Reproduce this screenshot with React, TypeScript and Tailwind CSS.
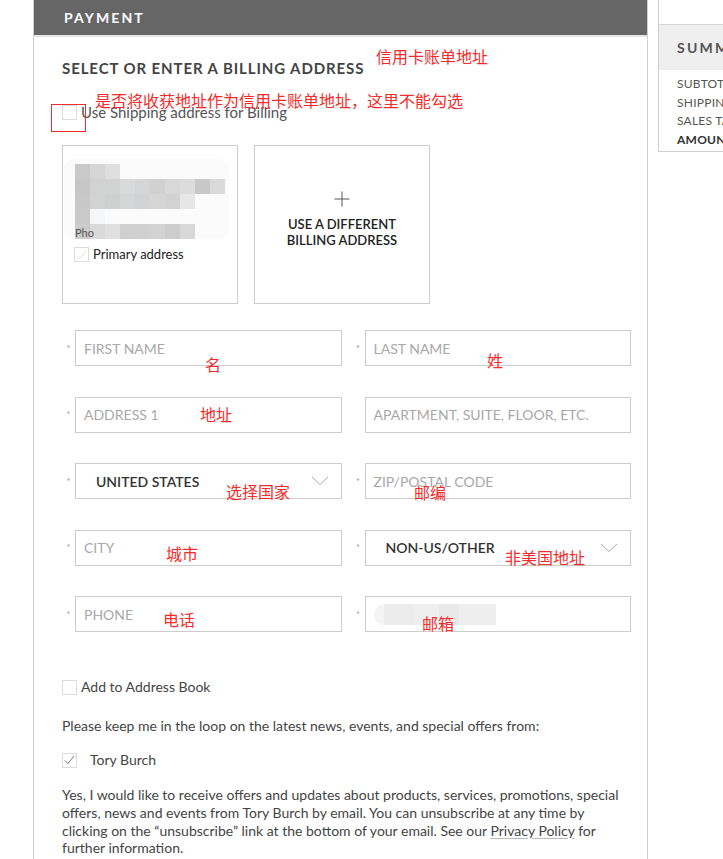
import type { ReactNode } from "react";

const font = { fontFamily: "Lato, 'Open Sans', Arial, sans-serif" };
const cjk = { fontFamily: "'Noto Sans CJK SC', sans-serif" };

// pixelated blur over the saved address
const blur: [number, number, string][] = [
    [0, 0, "#c9c9c9"], [1, 0, "#d6d6d6"], [2, 0, "#dedede"],
    [0, 1, "#c7c7c7"], [1, 1, "#d2d2d2"], [2, 1, "#d1d3d3"], [3, 1, "#dadada"], [4, 1, "#d4d5d7"], [5, 1, "#d1d1d1"], [6, 1, "#d8d8d8"], [7, 1, "#dcdcdc"], [8, 1, "#c8c8c8"], [9, 1, "#dadada"],
    [0, 2, "#c8c8c8"], [1, 2, "#d3d3d3"], [2, 2, "#cfd1d1"], [3, 2, "#d6d6d6"], [4, 2, "#d2d3d5"], [5, 2, "#d6d6d6"], [6, 2, "#d2d2d2"], [7, 2, "#e6e6e6"],
    [0, 3, "#c9c9c9"], [1, 3, "#f5f6f8"],
    [0, 4, "#cbcbcb"], [1, 4, "#dadada"], [2, 4, "#e0e0e0"], [3, 4, "#cfcfcf"], [4, 4, "#d0d0d0"], [5, 4, "#d3d3d3"], [6, 4, "#cdcdcd"], [7, 4, "#d8d8d8"],
];

function Note({ x, y, children }: { x: number; y: number; children: ReactNode }) {
    return (
        <span
            className="absolute text-[16px] leading-none text-[#f52b2b] whitespace-nowrap"
            style={{ ...cjk, left: x, top: y }}
        >
            {children}
        </span>
    );
}

function Box({ checked, faint }: { checked?: boolean; faint?: boolean }) {
    return (
        <span className="w-[15px] h-[15px] border border-[#dcdcdc] bg-white flex items-center justify-center shrink-0">
            {checked && (
                <svg width="11" height="10" viewBox="0 0 11 10">
                    <path d="M1 5.5 L4 8.5 L10 1" fill="none" stroke={faint ? "#e2e2e2" : "#777"} strokeWidth="1" />
                </svg>
            )}
        </span>
    );
}

function Field({ label, req = true, select, children }: { label?: string; req?: boolean; select?: boolean; children?: ReactNode }) {
    return (
        <div className="flex items-center">
            <span className="w-[13px] text-[9px] text-[#999] text-center leading-none">{req ? "*" : ""}</span>
            <div className="flex-1 h-[36px] border border-[#cccccc] bg-white flex items-center relative">
                {select ? (
                    <>
                        <span className="pl-[20px] text-[14px] font-semibold text-[#333]">{label}</span>
                        <svg className="absolute right-[12px] top-[12px]" width="18" height="10" viewBox="0 0 18 10">
                            <path d="M1 1 L9 8.5 L17 1" fill="none" stroke="#aaa" strokeWidth="1" />
                        </svg>
                    </>
                ) : (
                    <span className="pl-[8px] text-[14px] text-[#a8a8a8]">{label}</span>
                )}
                {children}
            </div>
        </div>
    );
}

export default function App() {
    return (
        <div className="relative w-[723px] h-[859px] overflow-hidden bg-white flex" style={font}>
            <div className="w-[33px] shrink-0" />

            {/* Payment panel */}
            <div className="w-[615px] shrink-0 border-x border-[#cfcfcf] flex flex-col">
                <div className="h-[37px] bg-[#666666] border-b-[2px] border-[#e4e4e4] flex items-center pl-[30px]">
                    <span className="text-white text-[14px] font-bold tracking-[0.15em]">PAYMENT</span>
                </div>

                <div className="pl-[28px] pr-[16px]">
                    <h2 className="mt-[22px] text-[15px] font-bold text-[#444] tracking-[0.06em] leading-[18px]">
                        SELECT OR ENTER A BILLING ADDRESS
                    </h2>

                    <label className="mt-[27px] flex items-center gap-[4px] text-[15px] text-[#555] leading-[16px]">
                        <Box />
                        <span>Use Shipping address for Billing</span>
                    </label>

                    {/* Address cards */}
                    <div className="mt-[25px] flex gap-[16px]">
                        <div className="w-[176px] h-[159px] border border-[#cccccc] relative">
                            <div className="absolute left-[1px] top-[13px] w-[165px] h-[80px] bg-[#fafafa] rounded-[10px] opacity-70" />
                            {blur.map(([cx, cy, c], i) => (
                                <div
                                    key={i}
                                    className="absolute w-[15px] h-[15px]"
                                    style={{ left: 12 + cx * 15, top: 18 + cy * 15, background: c }}
                                />
                            ))}
                            <span className="absolute left-[12px] top-[81px] text-[11px] text-[#555] leading-none">Pho</span>
                            <div className="absolute left-[11px] top-[99px] flex items-center gap-[4px] text-[13px] text-[#222]">
                                <Box checked faint />
                                <span>Primary address</span>
                            </div>
                        </div>
                        <div className="w-[176px] h-[159px] border border-[#cccccc] flex flex-col items-center pt-[45px]">
                            <svg width="16" height="16" viewBox="0 0 16 16">
                                <path d="M8 0.5 V15.5 M0.5 8 H15.5" stroke="#555" strokeWidth="1" />
                            </svg>
                            <span className="mt-[9px] text-[13px] font-semibold text-[#222] text-center leading-[16px]">
                                USE A DIFFERENT
                                <br />
                                BILLING ADDRESS
                            </span>
                        </div>
                    </div>

                    {/* Address form */}
                    <div className="mt-[26px] grid grid-cols-2 gap-x-[10px] gap-y-[30.5px]">
                        <Field label="FIRST NAME" />
                        <Field label="LAST NAME" />
                        <Field label="ADDRESS 1" />
                        <Field label="APARTMENT, SUITE, FLOOR, ETC." req={false} />
                        <Field label="UNITED STATES" select />
                        <Field label="ZIP/POSTAL CODE" />
                        <Field label="CITY" />
                        <Field label="NON-US/OTHER" select />
                        <Field label="PHONE" />
                        <Field>
                            <div className="absolute left-[8px] top-[7px] w-[122px] h-[21px] flex">
                                <div className="w-[10px] bg-[#f4f4f4] rounded-l-full" />
                                <div className="w-[30px] bg-[#ececec]" />
                                <div className="w-[25px] bg-[#efefef]" />
                                <div className="w-[20px] bg-[#e9e9e9]" />
                                <div className="w-[37px] bg-[#eeeeee]" />
                            </div>
                        </Field>
                    </div>

                    <label className="mt-[47px] flex items-center gap-[4px] text-[14px] text-[#444] leading-[16px]">
                        <Box />
                        <span>Add to Address Book</span>
                    </label>

                    <p className="mt-[22px] text-[14px] text-[#444] leading-[18px]">
                        Please keep me in the loop on the latest news, events, and special offers from:
                    </p>

                    <label className="mt-[17px] flex items-center gap-[13px] text-[14px] text-[#444] leading-[16px]">
                        <Box checked />
                        <span>Tory Burch</span>
                    </label>

                    <p className="mt-[18px] text-[14px] text-[#444] leading-[17.8px] pr-[10px]">
                        Yes, I would like to receive offers and updates about products, services, promotions, special
                        offers, news and events from Tory Burch by email. You can unsubscribe at any time by clicking on
                        the “unsubscribe” link at the bottom of your email. See our{" "}
                        <span className="underline decoration-[#bbb] underline-offset-2">Privacy Policy</span> for further
                        information.
                    </p>
                </div>
            </div>

            {/* Summary sidebar */}
            <div className="ml-[10px] w-[260px] shrink-0 self-start border-l border-b border-[#cfcfcf]">
                <div className="h-[25px] border-b border-[#d6d6d6]" />
                <div className="h-[45px] bg-[#efefef] flex items-center pl-[18px]">
                    <span className="text-[14px] font-bold text-[#555] tracking-[0.16em]">SUMMARY</span>
                </div>
                <div className="pl-[18px] pt-[5px] pb-[1px] text-[12px] text-[#555] leading-[18.7px] tracking-[0.02em]">
                    <div>SUBTOTAL</div>
                    <div>SHIPPING</div>
                    <div>SALES TAX</div>
                    <div className="font-bold text-[#333]">AMOUNT DUE</div>
                </div>
            </div>

            {/* annotations */}
            <div className="absolute left-[51px] top-[104px] w-[35px] h-[28px] border border-[#f52b2b]" />
            <Note x={376} y={48}>信用卡账单地址</Note>
            <Note x={95} y={92}>是否将收获地址作为信用卡账单地址，这里不能勾选</Note>
            <Note x={205} y={356}>名</Note>
            <Note x={487} y={352}>姓</Note>
            <Note x={200} y={406}>地址</Note>
            <Note x={226} y={483}>选择国家</Note>
            <Note x={414} y={484}>邮编</Note>
            <Note x={166} y={545}>城市</Note>
            <Note x={505} y={549}>非美国地址</Note>
            <Note x={163} y={611}>电话</Note>
            <Note x={422} y={615}>邮箱</Note>
        </div>
    );
}
